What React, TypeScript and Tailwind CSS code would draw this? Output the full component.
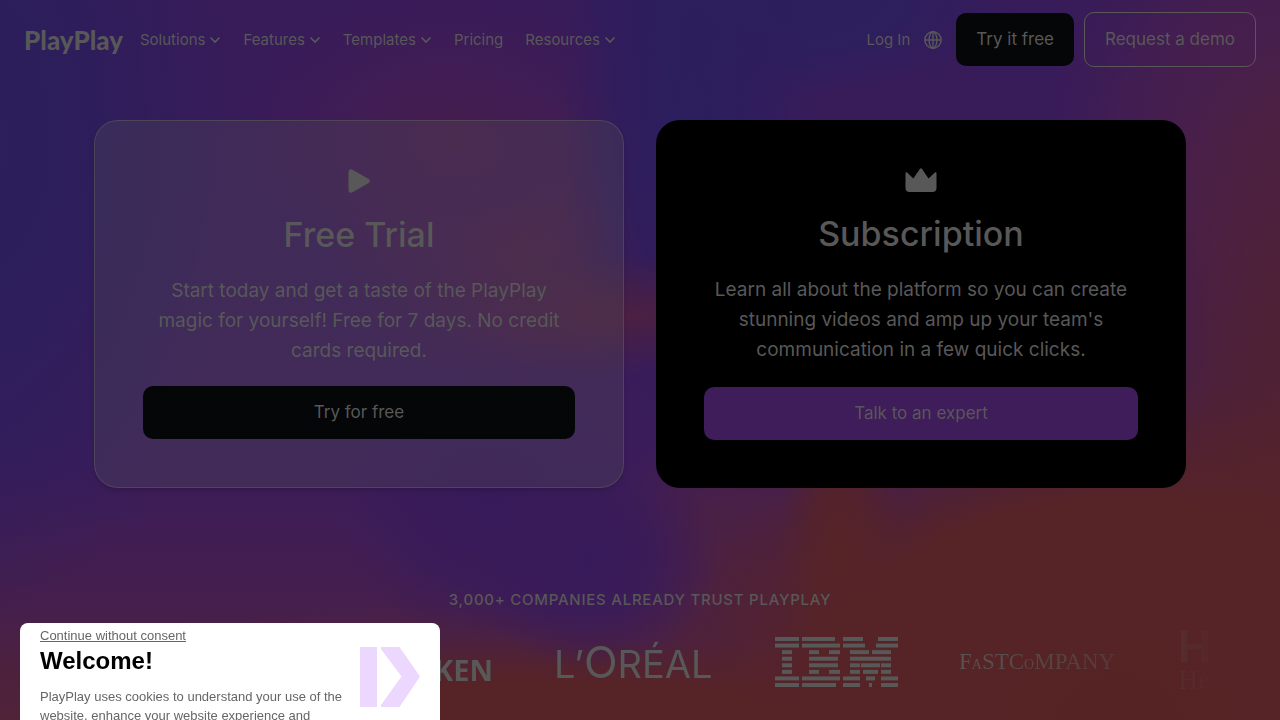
import type { ReactNode } from 'react'
import { clsx } from 'clsx'

const backdrop = [
  'radial-gradient(ellipse 130px 110px at 590px 560px, #371a5a 0%, #391b5acc 50%, #3f1c5a00 100%)',
  'radial-gradient(ellipse 150px 130px at 490px 510px, #371a5a 0%, #391b5acc 50%, #3f1c5a00 100%)',
  'radial-gradient(ellipse 190px 60px at 630px 315px, #4b2042 0%, #4b204200 100%)',
  'radial-gradient(ellipse 130px 320px at 690px 120px, #2b1f5e 0%, #2d1d5dcc 50%, #2d1d5d00 100%)',
  'radial-gradient(ellipse 230px 100px at 790px 0px, #2b1f5e 0%, #2b1f5ecc 50%, #2b1f5e00 100%)',
  'radial-gradient(ellipse 210px 150px at 450px 140px, #461e4e 0%, #431d52b3 45%, #3f1c5a00 100%)',
  'radial-gradient(ellipse 200px 160px at 520px 240px, #4a1f46 0%, #461e4eb3 45%, #3f1c5a00 100%)',
  'radial-gradient(ellipse 470px 340px at 1120px 720px, #562325 0%, #562327 65%, #56232700 100%)',
  'radial-gradient(ellipse 60px 260px at 840px 560px, #562325 0%, #562325b3 40%, #56232700 100%)',
  'radial-gradient(ellipse 260px 480px at 1330px 500px, #552328 0%, #522232cc 50%, #4c214000 100%)',
  'radial-gradient(ellipse 240px 240px at 1290px 130px, #4a2048 0%, #481f4ccc 55%, #3f1c5a00 100%)',
  'radial-gradient(ellipse 760px 180px at 520px 780px, #562327 0%, #562327 55%, #4d224099 80%, #4d224000 100%)',
  'radial-gradient(ellipse 180px 160px at 750px 580px, #4d2140 0%, #4d2140b3 50%, #4d214000 100%)',
  'radial-gradient(ellipse 280px 480px at -40px 140px, #291f5c 0%, #2b1e5ccc 45%, #3f1c5a00 100%)',
  'linear-gradient(180deg, #381b59 0%, #3b1c5a 65%, #461f4c 85%, #522330 100%)',
].join(', ')

const navLinks = [
  { label: 'Solutions', menu: true },
  { label: 'Features', menu: true },
  { label: 'Templates', menu: true },
  { label: 'Pricing', menu: false },
  { label: 'Resources', menu: true },
]

// [x, width] runs of each stripe, top to bottom
const ibmStripes: [number, number][][] = [
  [[0, 24], [27, 33], [68, 20], [103, 20]],
  [[0, 24], [27, 38], [68, 22], [101, 22]],
  [[7, 10], [34, 10], [54, 11], [75, 19], [97, 19]],
  [[7, 10], [34, 29], [75, 41]],
  [[7, 10], [34, 29], [75, 10], [86, 19], [106, 10]],
  [[7, 10], [34, 10], [54, 11], [75, 10], [88, 15], [106, 10]],
  [[0, 24], [27, 38], [68, 17], [91, 9], [106, 17]],
  [[0, 24], [27, 34], [68, 17], [94, 3], [106, 17]],
]

function Chevron() {
  return (
    <svg className="h-3 w-3" viewBox="0 0 12 12" fill="none" stroke="currentColor" strokeWidth="1.7" aria-hidden="true">
      <path d="M1.5 3.5 6 8 10.5 3.5" />
    </svg>
  )
}

function Globe() {
  return (
    <svg className="h-[18px] w-[18px]" viewBox="0 0 18 18" fill="none" stroke="currentColor" strokeWidth="1.4" aria-hidden="true">
      <circle cx="9" cy="9" r="8.2" />
      <ellipse cx="9" cy="9" rx="3.9" ry="8.2" />
      <path d="M9 .8v16.4M1 9h16" />
    </svg>
  )
}

function PlayIcon() {
  return (
    <svg className="h-6 w-6" viewBox="0 0 24 24" fill="currentColor" aria-hidden="true">
      <path d="M1.5 3.1C1.5.8 3.6-.5 5.5.7L21.3 9.8c2 1.2 2 3.2 0 4.4L5.5 23.3c-1.9 1.2-4-.1-4-2.4Z" />
    </svg>
  )
}

function CrownIcon() {
  return (
    <svg className="h-6 w-8" viewBox="0 0 32 24" fill="currentColor" aria-hidden="true">
      <path d="M.5 5.2c0-1 .9-1.3 1.6-.6L8.3 10.4 15 .8c.5-.9 1.4-.9 1.9 0l6.6 9.6 6.4-5.8c.7-.7 1.600-.4 1.600.6V20c0 2.500-1.500 4-4 4h-23c-2.500 0-4-1.500-4-4Z" />
    </svg>
  )
}

function PlanCard({ dark, icon, title, text, cta }: {
  dark?: boolean
  icon: ReactNode
  title: string
  text: string
  cta: string
}) {
  return (
    <article className={clsx(
      'flex flex-col items-center rounded-3xl p-12 text-center',
      dark ? 'bg-black' : 'border border-[#585858]/60 bg-[#585858]/25 shadow-md'
    )}>
      {icon}
      <h2 className="mt-5 text-[34px] leading-[44px] font-medium">{title}</h2>
      <p className="mt-[19px] text-[19px] leading-[30px]">{text}</p>
      <div className="mt-auto w-full pt-5">
        <button className={clsx('h-[53px] w-full rounded-[10px] text-[17px]', dark ? 'bg-[#3f1c5a]' : 'bg-[#040607]')}>
          {cta}
        </button>
      </div>
    </article>
  )
}

function CustomerLogos() {
  return (
    <ul className="mx-auto flex h-[68px] max-w-[1140px] items-center gap-[61px] overflow-hidden pl-[262px] whitespace-nowrap mask-[linear-gradient(to_right,#000_76%,transparent_102%)]">
      <li className="flex w-[161px] shrink-0 justify-end pt-4 font-['Noto_Sans'] text-[29px] font-bold">HEINEKEN</li>
      <li className="w-[160px] shrink-0 font-[Inter] text-[38px]">
        L’<span className="text-[44px]">O</span>RÉAL
      </li>
      <li className="w-[123px] shrink-0">
        <svg className="h-[50px] w-[123px]" viewBox="0 0 123 50" fill="currentColor" role="img" aria-label="IBM">
          {ibmStripes.map((runs, row) =>
            runs.map(([x, width]) => (
              <rect key={`${row}-${x}`} x={x} y={row * 6.571} width={width} height="4" />
            ))
          )}
        </svg>
      </li>
      <li className="w-[158px] shrink-0 font-['Liberation_Serif'] text-[23px]">
        F<span className="text-sm">A</span>STC<span className="text-sm">O</span>MPANY
      </li>
      <li className="shrink-0 font-['Liberation_Serif'] text-[28px] leading-[30px]">
        <span className="block font-[Inter] text-[44px] leading-[36px] font-bold">HCA</span>
        Healthcare
      </li>
    </ul>
  )
}

function CookieBanner() {
  return (
    <section
      aria-label="Cookie consent"
      className="fixed bottom-0 left-5 flex h-[97px] w-[420px] items-start justify-between overflow-hidden rounded-t-lg bg-white px-5 font-['Liberation_Sans',sans-serif] text-[13px] text-[#666]"
    >
      <div className="w-[310px] shrink-0 pt-1">
        <button className="block leading-[18px] underline">Continue without consent</button>
        <h2 className="text-2xl leading-8 font-bold text-black">Welcome!</h2>
        <p className="mt-[10px] leading-[19px]">
          PlayPlay uses cookies to understand your use of the website, enhance your website experience and
        </p>
      </div>
      <svg className="mt-6 h-[60px] w-[60px] shrink-0" viewBox="0 0 60 60" fill="#ecd7ff" aria-hidden="true">
        <path d="M0 0h17v60H0zM21 0h18.5L60 29.5 39.5 60H21v-2L41.5 29.5 21 2Z" />
      </svg>
    </section>
  )
}

export default function App() {
  return (
    <div
      className="min-h-screen overflow-hidden bg-[#3f1c5a] font-[Inter,sans-serif] text-[#585858]"
      style={{ backgroundImage: backdrop }}
    >
      <header className="flex h-[79px] items-center justify-between px-6">
        <div className="flex items-center gap-4">
          <a href="#" className="w-[100px] font-[Lato] text-[26px] leading-8 font-black">PlayPlay</a>
          <nav className="flex items-center gap-[22px] text-[15px] leading-6">
            {navLinks.map(link => (
              <a key={link.label} href="#" className="flex items-center gap-1">
                {link.label}
                {link.menu && <Chevron />}
              </a>
            ))}
          </nav>
        </div>
        <div className="flex items-center">
          <a href="#" className="text-[15px] leading-6">Log In</a>
          <button aria-label="Change language" className="mx-[14px]"><Globe /></button>
          <button className="h-[53px] rounded-[10px] bg-[#040607] px-5 text-[17px]">Try it free</button>
          <button className="ml-[10px] h-[55px] rounded-[10px] border border-[#585858] px-5 text-[17px]">Request a demo</button>
        </div>
      </header>

      <main>
        <div className="mx-auto mt-[41px] grid max-w-[1092px] grid-cols-2 gap-8">
          <PlanCard
            icon={<PlayIcon />}
            title="Free Trial"
            text="Start today and get a taste of the PlayPlay magic for yourself! Free for 7 days. No credit cards required."
            cta="Try for free"
          />
          <PlanCard
            dark
            icon={<CrownIcon />}
            title="Subscription"
            text="Learn all about the platform so you can create stunning videos and amp up your team's communication in a few quick clicks."
            cta="Talk to an expert"
          />
        </div>

        <section className="pt-[100px] pb-6">
          <h3 className="mb-4 text-center text-[15px] leading-6 font-medium tracking-wider">3,000+ COMPANIES ALREADY TRUST PLAYPLAY</h3>
          <CustomerLogos />
        </section>
      </main>

      <CookieBanner />
    </div>
  )
}
